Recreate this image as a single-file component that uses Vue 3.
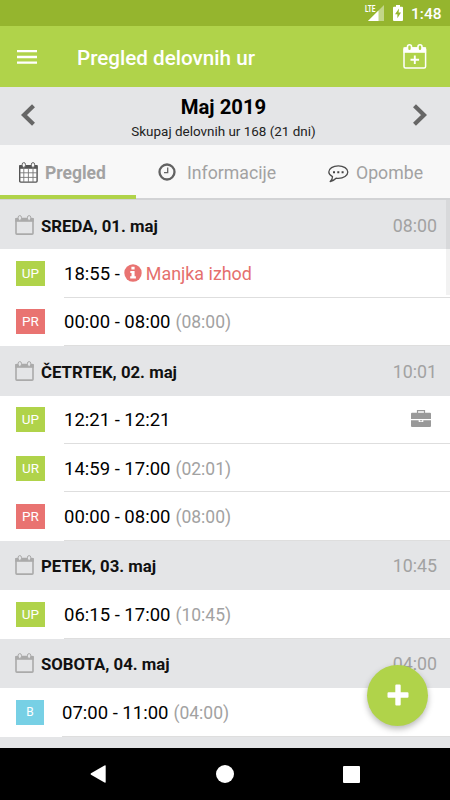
<script setup>
const days = [
  {
    name: 'SREDA, 01. maj', total: '08:00',
    entries: [
      { code: 'UP', kind: 'green', time: '18:55 -', missing: 'Manjka izhod' },
      { code: 'PR', kind: 'red', time: '00:00 - 08:00', sum: '(08:00)' }
    ]
  },
  {
    name: 'ČETRTEK, 02. maj', total: '10:01',
    entries: [
      { code: 'UP', kind: 'green', time: '12:21 - 12:21', business: true },
      { code: 'UR', kind: 'green', time: '14:59 - 17:00', sum: '(02:01)' },
      { code: 'PR', kind: 'red', time: '00:00 - 08:00', sum: '(08:00)' }
    ]
  },
  {
    name: 'PETEK, 03. maj', total: '10:45',
    entries: [{ code: 'UP', kind: 'green', time: '06:15 - 17:00', sum: '(10:45)' }]
  },
  {
    name: 'SOBOTA, 04. maj', total: '04:00',
    entries: [{ code: 'B', kind: 'blue', time: '07:00 - 11:00', sum: '(04:00)' }]
  }
]
</script>

<template>
  <div class="screen">
    <div class="status">
      <svg class="signal" width="20" height="17" viewBox="0 0 20 17">
        <path d="M19 0V16H3z" fill="#c2d689" />
        <path d="M0 0H11V8.200H0z" fill="#95b52e" />
        <path d="M13.500 5.500V16H3z" fill="#fff" />
        <text x="0" y="7.300" class="lte" textLength="10.500" lengthAdjust="spacingAndGlyphs">LTE</text>
      </svg>
      <svg class="battery" width="10" height="16" viewBox="0 0 10 16">
        <path d="M3 0h4v1.700h2q1 0 1 1V15q0 1-1 1H1q-1 0-1-1V2.700q0-1 1-1h2z" fill="#fff" />
        <path d="M6 3.600 2 9.200h2.400v4L8 7.600H5.600z" fill="#95b52e" />
      </svg>
      <span class="clock">1:48</span>
    </div>

    <header class="bar">
      <svg class="menu" width="20" height="14" viewBox="0 0 20 14">
        <path d="M0 1.200h20M0 7h20M0 12.700h20" stroke="#fff" stroke-width="2.300" />
      </svg>
      <h1>Pregled delovnih ur</h1>
      <svg class="addcal" width="24" height="25" viewBox="0 0 24 25">
        <rect x="1" y="4" width="21.600" height="20" rx="1.500" fill="none" stroke="#fff" stroke-width="1.500" />
        <path d="M.5 3.300h22.600v5.500H.5z" fill="#fff" />
        <rect x="4.500" y=".8" width="4" height="6" rx="2" fill="#b0d34a" stroke="#fff" stroke-width="1.600" />
        <rect x="15" y=".8" width="4" height="6" rx="2" fill="#b0d34a" stroke="#fff" stroke-width="1.600" />
        <path d="M11.800 11.500v8.500M7.500 15.700h8.600" stroke="#fff" stroke-width="1.900" />
      </svg>
    </header>

    <section class="month">
      <svg width="15" height="22" viewBox="0 0 15 22"><path d="M12.500 1.800 3 11l9.500 9.200" fill="none" stroke="#666" stroke-width="4.200" /></svg>
      <div class="month-text">
        <h2>Maj 2019</h2>
        <p>Skupaj delovnih ur 168 (21 dni)</p>
      </div>
      <svg width="15" height="22" viewBox="0 0 15 22"><path d="M2.500 1.800 12 11l-9.500 9.200" fill="none" stroke="#666" stroke-width="4.200" /></svg>
    </section>

    <nav class="tabs">
      <div class="tab active">
        <svg width="19" height="21" viewBox="0 0 19 21">
          <rect x=".7" y="3.600" width="17.400" height="16.500" rx="1" fill="#fff" stroke="#555" stroke-width="1.400" />
          <path d="M.3 3h18.200v3.800H.3z" fill="#555" />
          <path d="M4.800 6v14M9.400 6v14M14 6v14M1 10.800h17M1 15.400h17" stroke="#777" stroke-width=".9" />
          <rect x="3.200" y=".6" width="3.200" height="4.800" rx="1.600" fill="#f8f8f8" stroke="#666" />
          <rect x="12.400" y=".6" width="3.200" height="4.800" rx="1.600" fill="#f8f8f8" stroke="#666" />
        </svg>
        <span>Pregled</span>
      </div>
      <div class="tab info">
        <svg width="18" height="18" viewBox="0 0 18 18">
          <circle cx="9" cy="9" r="7.500" fill="none" stroke="#626262" stroke-width="2.300" />
          <path d="M9.700 4.500v5.200H6" fill="none" stroke="#666" stroke-width="1.300" />
        </svg>
        <span>Informacije</span>
      </div>
      <div class="tab notes">
        <svg width="21" height="18" viewBox="0 0 21 18">
          <path d="M4.500 11.700C2.200 10.500.8 9 .8 7.100.8 3.600 5 .8 10.300.8s9.500 2.800 9.500 6.300-4.200 6.300-9.500 6.300q-1.100 0-2.200-.2Q6 15.500 2.200 16.500 4.500 14.300 4.500 11.700z" fill="none" stroke="#4d4d4d" stroke-width="1.300" stroke-linejoin="round" />
          <path d="M5 6.300h2v2H5zM9.300 6.300h2v2h-2zM13.600 6.300h2v2h-2z" fill="#444" />
        </svg>
        <span>Opombe</span>
      </div>
    </nav>

    <main class="list">
      <section v-for="day in days" :key="day.name">
        <div class="day">
          <svg width="19" height="20" viewBox="0 0 19 20">
            <rect x="1" y="3.500" width="17" height="15.600" rx=".8" fill="none" stroke="#aaa" stroke-width="1.600" />
            <path d="M.3 3h18.400v3.800H.3z" fill="#aaa" />
            <rect x="3.200" y=".6" width="3.200" height="4.800" rx="1.600" fill="#e4e5e7" stroke="#aaa" />
            <rect x="12.500" y=".6" width="3.200" height="4.800" rx="1.600" fill="#e4e5e7" stroke="#aaa" />
          </svg>
          <h3>{{ day.name }}</h3>
          <span class="total">{{ day.total }}</span>
        </div>
        <div v-for="entry in day.entries" :key="entry.code" class="entry">
          <span class="badge" :class="entry.kind">{{ entry.code }}</span>
          <div class="detail">
            <span class="time">{{ entry.time }}</span>
            <span v-if="entry.sum" class="sum">{{ entry.sum }}</span>
            <template v-if="entry.missing">
              <svg class="alert" width="18" height="18" viewBox="0 0 18 18">
                <circle cx="9" cy="9" r="8.700" fill="#e97371" />
                <path d="M7.400 2.700h3.200v2.700H7.400zM6.300 6.900h4.300v5.400h1.300v2.300H6.200v-2.300h1.300V9H6.300z" fill="#fff" />
              </svg>
              <span class="missing">{{ entry.missing }}</span>
            </template>
            <svg v-if="entry.business" class="case" width="20" height="17" viewBox="0 0 20 17">
              <path d="M6.500 3V.6h7V3" fill="none" stroke="#999" stroke-width="1.200" />
              <path d="M1 2.800h18q1 0 1 1V9H0V3.800q0-1 1-1zM0 10.200h7.700v1.900h4.600v-1.900H20V16q0 1-1 1H1q-1 0-1-1zM8.800 10.200h2.400v1H8.800z" fill="#999" />
            </svg>
          </div>
        </div>
      </section>
      <div class="day"></div>
      <i class="scroll"></i>
    </main>

    <button class="fab" aria-label="+">
      <svg width="22" height="22" viewBox="0 0 22 22"><path d="M9.300.5h3.400q1 0 1 1v6.800h6.800q1 0 1 1v3.400q0 1-1 1h-6.800v6.800q0 1-1 1H9.300q-1 0-1-1v-6.800H1.500q-1 0-1-1V9.300q0-1 1-1h6.800V1.500q0-1 1-1z" fill="#fff" /></svg>
    </button>

    <footer class="system">
      <svg width="16" height="18" viewBox="0 0 16 18"><path d="M14.500.5Q15.700 0 15.700 1v16q0 1-1.200.5L1 9.800Q0 9 1 8.200z" fill="#fff" /></svg>
      <svg width="18" height="18" viewBox="0 0 18 18"><circle cx="9" cy="9" r="9" fill="#fff" /></svg>
      <svg width="17" height="17" viewBox="0 0 17 17"><rect width="17" height="17" rx="1" fill="#fff" /></svg>
    </footer>
  </div>
</template>

<style>
body { margin: 0; }
</style>

<style scoped>
* { box-sizing: border-box; }
h1, h2, h3, p { margin: 0; }
svg { display: block; flex: none; }
.screen { position: relative; display: flex; flex-direction: column; width: 450px; height: 800px; overflow: hidden; background: #fff; font-family: Roboto, sans-serif; color: #000; white-space: nowrap; }
.status { height: 26px; flex: none; background: #95b52e; display: flex; align-items: center; padding-left: 365px; }
.signal { overflow: visible; }
.lte { font: 700 9.500px Roboto, sans-serif; fill: #fff; }
.battery { margin-left: 8px; }
.clock { margin-left: 8px; color: #fff; font-size: 15.500px; font-weight: 500; line-height: 20px; padding-top: 2px; }
.bar { height: 61px; flex: none; background: #b0d34a; display: flex; align-items: center; padding: 0 23px 0 17px; }
.menu { margin-top: 1px; }
.bar h1 { margin-left: 40px; padding-top: 3px; color: #fff; font-size: 20.650px; font-weight: 500; line-height: 28px; flex: 1; }
.month { height: 58px; flex: none; background: #e4e5e7; display: flex; justify-content: space-between; align-items: center; padding: 0 23px 2px 21px; }
.month-text { text-align: center; margin-left: -1px; }
.month h2 { font-size: 20.300px; font-weight: 700; line-height: 24px; padding-top: 6px; }
.month p { color: #222; font-size: 13.450px; line-height: 20px; padding-top: 3px; }
.tabs { height: 54.700px; flex: none; background: #f8f8f8; border-bottom: 2px solid #d2d3d5; display: flex; }
.tab { height: 54px; width: 136px; display: flex; align-items: center; color: #a2a2a2; font-size: 17.700px; padding-left: 19px; }
.tab.active { font-weight: 700; font-size: 17.500px; border-bottom: 4px solid #b0d34a; }
.tab.active svg { margin-top: 4px; }
.tab.active span { margin-left: 7px; padding-top: 5px; }
.tab.info { width: 180px; padding-left: 22px; }
.tab.info span { margin-left: 11px; padding-top: 2px; }
.tab.notes { width: 134px; padding-left: 12px; }
.tab.notes svg { margin-top: 3px; }
.tab.notes span { margin-left: 7px; padding-top: 2px; }
.list { position: relative; flex: 1; min-height: 0; overflow: hidden; }
.day { height: 49.700px; background: #e4e5e7; display: flex; align-items: center; padding: 0 13px 0 15px; }
.day h3 { margin-left: 7px; flex: 1; font-size: 16.750px; font-weight: 700; line-height: 24px; padding-top: 2px; color: #111; }
.total { color: #a2a2a2; font-size: 17.800px; padding-top: 1px; }
.entry { height: 48.300px; display: flex; align-items: center; padding-left: 16px; }
.badge { width: 29px; height: 25px; color: #fff; font-size: 13.500px; line-height: 25px; text-align: center; }
.green { background: #b0d34a; }
.red { background: #e97371; }
.blue { background: #77d0e5; width: 28px; font-size: 12px; }
.detail { margin-left: 19px; flex: 1; height: 100%; border-bottom: 1px solid #dedede; display: flex; align-items: center; padding-right: 19px; }
.blue + .detail { margin-left: 18px; }
.time { font-size: 18.500px; padding-top: 2px; }
.sum { margin-left: 5px; color: #a2a2a2; font-size: 17.500px; padding-top: 2px; }
.alert { margin-left: 4px; }
.missing { margin-left: 4px; color: #e56f6d; font-size: 17.900px; padding-top: 1px; }
.case { margin-left: auto; margin-top: -1px; }
.scroll { position: absolute; top: 0; right: 0; width: 4px; height: 95px; background: rgba(0, 0, 0, .05); }
.fab { position: absolute; left: 367px; top: 665px; width: 61px; height: 61px; border: 0; border-radius: 50%; padding: 0 0 2px; background: #b0d34a; box-shadow: 0 3px 6px rgba(0, 0, 0, .28); display: grid; place-items: center; }
.system { height: 52px; flex: none; background: #000; display: flex; align-items: center; justify-content: space-between; padding: 0 90px; }
</style>
